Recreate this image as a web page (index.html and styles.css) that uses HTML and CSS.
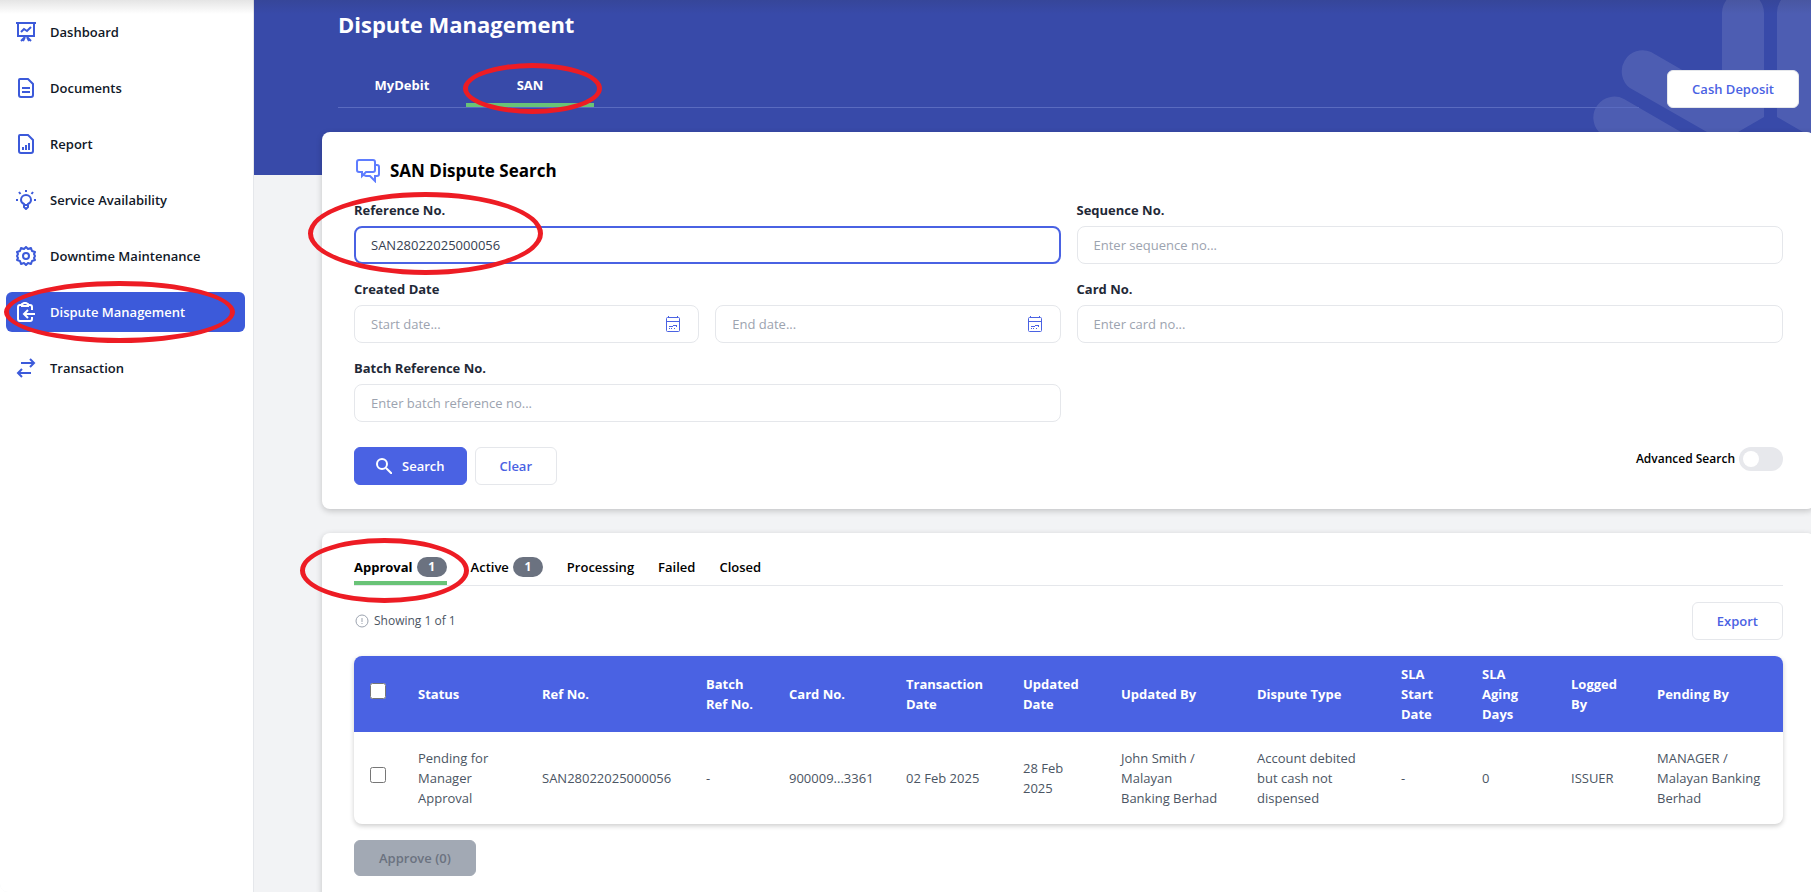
FILE: index.html
```
<!DOCTYPE html>
<html lang="en">
<head>
    <meta charset="UTF-8">
    <meta name="viewport" content="width=device-width, initial-scale=1.0">
    <title>Dispute Management</title>
    <link rel="stylesheet" href="styles.css">
</head>
<body>
    <div class="layout">
        <aside class="sidebar">
            <nav>
                <a href="#" class="nav-item">
                    <svg viewBox="0 0 20 20"><path d="M0 1h20M2 1v13h16V1M7 19l2-4M13 19l-2-4M5 19l4-4M15 19l-4-4M5 10l3-3 3 2 4-4"/></svg>
                    Dashboard
                </a>
                <a href="#" class="nav-item">
                    <svg viewBox="0 0 20 20"><path d="M4 1h8l5 5v11a2 2 0 0 1-2 2H5a2 2 0 0 1-2-2V2a1 1 0 0 1 1-1zM6 10h8M6 14h8"/></svg>
                    Documents
                </a>
                <a href="#" class="nav-item">
                    <svg viewBox="0 0 20 20"><path d="M4 1h8l5 5v11a2 2 0 0 1-2 2H5a2 2 0 0 1-2-2V2a1 1 0 0 1 1-1zM7 16v-3M10 16v-5M13 16V9"/></svg>
                    Report
                </a>
                <a href="#" class="nav-item">
                    <svg viewBox="0 0 20 20"><path d="M8 15v-1C6 13 5 11.500 5 10a5 5 0 0 1 10 0c0 1.500-1 3-3 4v1zM8 15v2l2 2 2-2v-2M0 10h2M18 10h2M10 0v2M3 2l1.500 2M17 2l-1.500 2"/></svg>
                    Service Availability
                </a>
                <a href="#" class="nav-item">
                    <svg viewBox="0 0 20 20"><path d="M10 1l2 2 3-1 1 3 3 1-1 2 1 2-1 2 1 2-3 1-1 3-3-1-2 2-2-2-3 1-1-3-3-1 1-2-1-2 1-2-1-2 3-1 1-3 3 1z" stroke-linejoin="round"/><circle cx="10" cy="10" r="3"/></svg>
                    Downtime Maintenance
                </a>
                <a href="#" class="nav-item active">
                    <svg viewBox="0 0 20 20"><path d="M6 3H4a2 2 0 0 0-2 2v12a2 2 0 0 0 2 2h10a2 2 0 0 0 2-2v-2M12 3h2a2 2 0 0 1 2 2v3M6 4V2l2-1h2l2 1v2zM19 12H9M12 8l-4 4 4 4"/></svg>
                    Dispute Management
                    <span class="mark mark-nav"></span>
                </a>
                <a href="#" class="nav-item">
                    <svg viewBox="0 0 20 20"><path d="M5 5h13M14 1l4 4-4 4M15 15H2M6 11l-4 4 4 4"/></svg>
                    Transaction
                </a>
            </nav>
        </aside>

        <main class="main">
            <header class="header">
                <svg class="header-art" viewBox="0 0 221 132">
                    <path d="M132 13a21 21 0 0 1 42 0v104l-26 15h-31L40 88a21 21 0 0 1 21-36l71 41z"/>
                    <path d="M187 13a21 21 0 0 1 34-17v136h-8l-26-15z"/>
                    <path d="M9 132a21 21 0 0 1 25-33l57 33z"/>
                </svg>
                <h1>Dispute Management</h1>
                <div class="header-row">
                    <div class="header-tabs">
                        <a href="#" class="header-tab">MyDebit</a>
                        <a href="#" class="header-tab active">SAN<span class="mark mark-tab"></span></a>
                    </div>
                    <button type="button" class="btn">Cash Deposit</button>
                </div>
            </header>

            <section class="card search-card">
                <h2>
                    <svg viewBox="0 0 24 24"><path d="M3 1h14a2 2 0 0 1 2 2v8a2 2 0 0 1-2 2h-7l-4 4v-4H3a2 2 0 0 1-2-2V3a2 2 0 0 1 2-2zM19 6h2a2 2 0 0 1 2 2v7a2 2 0 0 1-2 2h-2v5l-5-5h-4l-2-1"/></svg>
                    SAN Dispute Search
                </h2>
                <form>
                    <div class="fields">
                        <div class="field">
                            <label for="refNo">Reference No.</label>
                            <input type="text" id="refNo" class="focused" value="SAN28022025000056">
                            <span class="mark mark-ref"></span>
                        </div>
                        <div class="field">
                            <label for="seqNo">Sequence No.</label>
                            <input type="text" id="seqNo" placeholder="Enter sequence no...">
                        </div>
                        <div class="field">
                            <label for="startDate">Created Date</label>
                            <div class="dates">
                                <div class="date">
                                    <input type="text" id="startDate" placeholder="Start date...">
                                    <svg viewBox="0 0 16 16"><path d="M2.500 1.500h11a1 1 0 0 1 1 1v12a1 1 0 0 1-1 1h-11a1 1 0 0 1-1-1v-12a1 1 0 0 1 1-1zM1 5.500h14M3.500 0v2M12.500 0v2M4 12.500h1M6 12.500h1M9 12.500h1M4 10.500h4M8 9.500h4M11 10.500h1"/></svg>
                                </div>
                                <div class="date">
                                    <input type="text" id="endDate" aria-label="End date" placeholder="End date...">
                                    <svg viewBox="0 0 16 16"><path d="M2.500 1.500h11a1 1 0 0 1 1 1v12a1 1 0 0 1-1 1h-11a1 1 0 0 1-1-1v-12a1 1 0 0 1 1-1zM1 5.500h14M3.500 0v2M12.500 0v2M4 12.500h1M6 12.500h1M9 12.500h1M4 10.500h4M8 9.500h4M11 10.500h1"/></svg>
                                </div>
                            </div>
                        </div>
                        <div class="field">
                            <label for="cardNo">Card No.</label>
                            <input type="text" id="cardNo" placeholder="Enter card no...">
                        </div>
                        <div class="field">
                            <label for="batchNo">Batch Reference No.</label>
                            <input type="text" id="batchNo" placeholder="Enter batch reference no...">
                        </div>
                    </div>
                    <div class="actions">
                        <button type="button" class="btn primary">
                            <svg viewBox="0 0 16 16"><circle cx="6" cy="6" r="5"/><path d="M10 10l6 6"/></svg>
                            Search
                        </button>
                        <button type="reset" class="btn">Clear</button>
                        <label class="advanced">Advanced Search <input type="checkbox" class="toggle"></label>
                    </div>
                </form>
            </section>

            <section class="card list-card">
                <div class="list-tabs">
                    <a href="#" class="list-tab active">Approval <span class="badge">1</span><span class="mark mark-approval"></span></a>
                    <a href="#" class="list-tab">Active <span class="badge">1</span></a>
                    <a href="#" class="list-tab">Processing</a>
                    <a href="#" class="list-tab">Failed</a>
                    <a href="#" class="list-tab">Closed</a>
                </div>
                <div class="list-bar">
                    <p>
                        <svg viewBox="0 0 14 14"><circle cx="7" cy="7" r="6"/><path d="M7 4v4M7 9v1"/></svg>
                        Showing 1 of 1
                    </p>
                    <button type="button" class="btn">Export</button>
                </div>
                <table>
                    <colgroup>
                        <col class="c-check"><col class="c-status"><col class="c-ref"><col class="c-batch"><col class="c-card"><col class="c-trans"><col class="c-updated"><col class="c-by"><col class="c-type"><col class="c-start"><col class="c-aging"><col class="c-logged"><col class="c-pending">
                    </colgroup>
                    <thead>
                        <tr>
                            <th><input type="checkbox" aria-label="Select all"></th>
                            <th>Status</th>
                            <th>Ref No.</th>
                            <th>Batch Ref No.</th>
                            <th>Card No.</th>
                            <th>Transaction Date</th>
                            <th>Updated Date</th>
                            <th>Updated By</th>
                            <th>Dispute Type</th>
                            <th>SLA Start Date</th>
                            <th>SLA Aging Days</th>
                            <th>Logged By</th>
                            <th>Pending By</th>
                        </tr>
                    </thead>
                    <tbody>
                        <tr>
                            <td><input type="checkbox" aria-label="Select row"></td>
                            <td>Pending for Manager Approval</td>
                            <td>SAN28022025000056</td>
                            <td>-</td>
                            <td>900009...3361</td>
                            <td>02 Feb 2025</td>
                            <td>28 Feb 2025</td>
                            <td>John Smith / Malayan <br>Banking Berhad</td>
                            <td>Account debited but cash not dispensed</td>
                            <td>-</td>
                            <td>0</td>
                            <td>ISSUER</td>
                            <td>MANAGER / Malayan Banking Berhad</td>
                        </tr>
                    </tbody>
                </table>
                <button type="button" class="btn approve" disabled>Approve (0)</button>
            </section>
        </main>
    </div>
</body>
</html>
```
FILE: styles.css
```
* {
    box-sizing: border-box;
}
body {
    margin: 0;
    background: #fff;
    color: #1f2937;
    font-family: "Segoe UI", "Open Sans", "Noto Sans", sans-serif;
    font-size: 13px;
    line-height: 20px;
}
a {
    color: inherit;
    text-decoration: none;
}
svg {
    fill: none;
    stroke: currentColor;
    flex: none;
}
h1, h2, p {
    margin: 0;
}
.layout {
    position: relative;
    display: flex;
    height: calc(100vh - 3px);
    background: #f2f3f5;
    border-bottom-left-radius: 8px;
    overflow: hidden;
}
/* shadow of the bar above */
.layout::before {
    content: "";
    position: absolute;
    top: 0;
    left: 0;
    right: 0;
    height: 14px;
    background: linear-gradient(rgba(40,40,40,0.12), rgba(40,40,40,0));
    z-index: 2;
    pointer-events: none;
}

/* sidebar */
.sidebar {
    position: relative;
    z-index: 1;
    flex: none;
    width: 254px;
    padding: 12px 8px 12px 6px;
    background: #fff;
    border-right: 1px solid #e5e7eb;
}
.sidebar nav {
    display: flex;
    flex-direction: column;
    gap: 16px;
}
.nav-item {
    position: relative;
    display: flex;
    align-items: center;
    gap: 14px;
    height: 40px;
    padding: 0 10px;
    border-radius: 6px;
    color: #111827;
    font-weight: 600;
}
.nav-item svg {
    width: 20px;
    height: 20px;
    color: #3c5ada;
    stroke-width: 2;
}
.nav-item.active {
    background: #3c5ada;
    color: #fff;
}
.nav-item.active svg {
    color: #fff;
}

/* header */
.main {
    flex: 1;
    min-width: 0;
}
.header {
    position: relative;
    height: 175px;
    padding: 7px 12px 0 84px;
    background: #384aa9;
    color: #fff;
}
.header-art {
    position: absolute;
    top: 0;
    right: 0;
    width: 221px;
    height: 132px;
    fill: rgba(255,255,255,0.11);
    stroke: none;
}
.header h1 {
    font-size: 22px;
    line-height: 34px;
    font-weight: 700;
}
.header-row {
    position: relative;
    display: flex;
    align-items: flex-end;
    gap: 28px;
    margin-top: 23px;
}
.header-tabs {
    flex: 1;
    display: flex;
    border-bottom: 1px solid #5a6bc0;
}
.header-tab {
    position: relative;
    width: 128px;
    height: 43px;
    padding-top: 11px;
    border-bottom: 4px solid transparent;
    text-align: center;
    font-weight: 700;
}
.header-tab.active {
    border-color: #69c377;
}

/* buttons */
.btn {
    display: inline-flex;
    align-items: center;
    justify-content: center;
    gap: 10px;
    height: 38px;
    padding: 0 24px;
    border: 1px solid #e5e7eb;
    border-radius: 6px;
    background: #fff;
    color: #4a62e3;
    font-family: inherit;
    font-size: 13px;
    font-weight: 600;
    cursor: pointer;
}
.btn.primary {
    padding: 0 21px;
    border-color: #4a62e3;
    background: #4a62e3;
    color: #fff;
}
.btn svg {
    width: 16px;
    height: 16px;
    stroke-width: 2;
}
.btn.approve {
    height: 36px;
    margin-top: 16px;
    border-color: #a2a9b4;
    background: #a2a9b4;
    color: #6b7280;
}

/* cards */
.card {
    position: relative;
    margin: 0 -4px 24px 68px;
    padding: 24px 32px;
    background: #fff;
    border-radius: 8px;
    box-shadow: 0 2px 6px rgba(0,0,0,0.2);
}
.search-card {
    margin-top: -43px;
}
.card h2 {
    display: flex;
    align-items: center;
    gap: 10px;
    height: 30px;
    padding-left: 2px;
    color: #000;
    font-size: 17px;
    font-weight: 700;
}
.card h2 svg {
    width: 24px;
    height: 24px;
    color: #5f7dff;
    stroke-width: 2;
}
.fields {
    display: grid;
    grid-template-columns: 1fr 1fr;
    gap: 15px 16px;
    margin-top: 14px;
}
.field {
    position: relative;
}
.field label {
    display: block;
    margin-bottom: 6px;
    font-weight: 700;
}
.field input {
    display: block;
    width: 100%;
    height: 38px;
    padding: 0 16px;
    border: 1px solid #e5e7eb;
    border-radius: 8px;
    background: #fff;
    color: #374151;
    font-family: inherit;
    font-size: 13px;
    outline: none;
}
.field input::placeholder {
    color: #9ca3af;
}
.field input.focused {
    padding: 0 15px;
    border: 2px solid #4a62e3;
}
.dates {
    display: grid;
    grid-template-columns: 1fr 1fr;
    gap: 16px;
}
.date {
    position: relative;
}
.date svg {
    position: absolute;
    top: 11px;
    right: 18px;
    width: 16px;
    height: 16px;
    color: #4a62e3;
}
.actions {
    display: flex;
    align-items: flex-start;
    gap: 8px;
    margin-top: 25px;
}
.advanced {
    display: flex;
    align-items: center;
    gap: 4px;
    margin-left: auto;
    color: #000;
    font-size: 12px;
    font-weight: 600;
}
.toggle {
    appearance: none;
    width: 44px;
    height: 24px;
    margin: 0;
    padding: 4px;
    border-radius: 12px;
    background: #e7e8ec;
}
.toggle::before {
    content: "";
    display: block;
    width: 16px;
    height: 16px;
    border-radius: 50%;
    background: #fff;
}
.toggle:checked {
    background: #4a62e3;
}

/* list */
.list-tabs {
    display: flex;
    gap: 24px;
    border-bottom: 1px solid #e5e7eb;
}
.list-tab {
    position: relative;
    display: flex;
    align-items: flex-start;
    gap: 4px;
    height: 28px;
    color: #000;
    font-weight: 600;
}
.list-tab.active {
    border-bottom: 4px solid #69c377;
    font-weight: 700;
}
.badge {
    width: 30px;
    border-radius: 10px;
    background: #6b7280;
    color: #fff;
    font-size: 12px;
    font-weight: 700;
    text-align: center;
}
.list-bar {
    display: flex;
    align-items: center;
    justify-content: space-between;
    margin: 16px 0;
}
.list-bar p {
    display: flex;
    align-items: center;
    gap: 5px;
    color: #4b5563;
    font-size: 12px;
}
.list-bar p svg {
    width: 14px;
    height: 14px;
    margin-left: 1px;
    color: #9ca3af;
}
table {
    width: 100%;
    table-layout: fixed;
    border-collapse: collapse;
    border-radius: 8px;
    box-shadow: 0 2px 5px rgba(0,0,0,0.2);
    overflow: hidden;
}
th, td {
    padding: 8px 16px;
    text-align: left;
    vertical-align: middle;
}
th {
    background: #4a62e3;
    color: #fff;
    font-weight: 700;
}
td {
    padding: 16px;
    color: #4b5563;
}
table input {
    display: block;
    width: 16px;
    height: 16px;
    margin: 0 0 6px;
}
.c-check { width: 48px; }
.c-status { width: 124px; }
.c-ref { width: 164px; }
.c-batch { width: 83px; }
.c-card, .c-trans { width: 117px; }
.c-updated { width: 98px; }
.c-by { width: 136px; }
.c-type { width: 144px; }
.c-start { width: 81px; }
.c-aging { width: 89px; }
.c-logged { width: 86px; }
.c-pending { width: 142px; }

/* red markers */
.mark {
    position: absolute;
    z-index: 3;
    border: 5px solid #ed1c24;
    border-radius: 50%;
    pointer-events: none;
}
.mark-nav {
    top: -11px;
    left: -2px;
    width: 231px;
    height: 62px;
}
.mark-tab {
    top: -1px;
    left: -3px;
    width: 139px;
    height: 51px;
}
.mark-ref {
    top: -8px;
    left: -46px;
    width: 235px;
    height: 83px;
}
.mark-approval {
    top: -19px;
    left: -54px;
    width: 169px;
    height: 65px;
}
```
